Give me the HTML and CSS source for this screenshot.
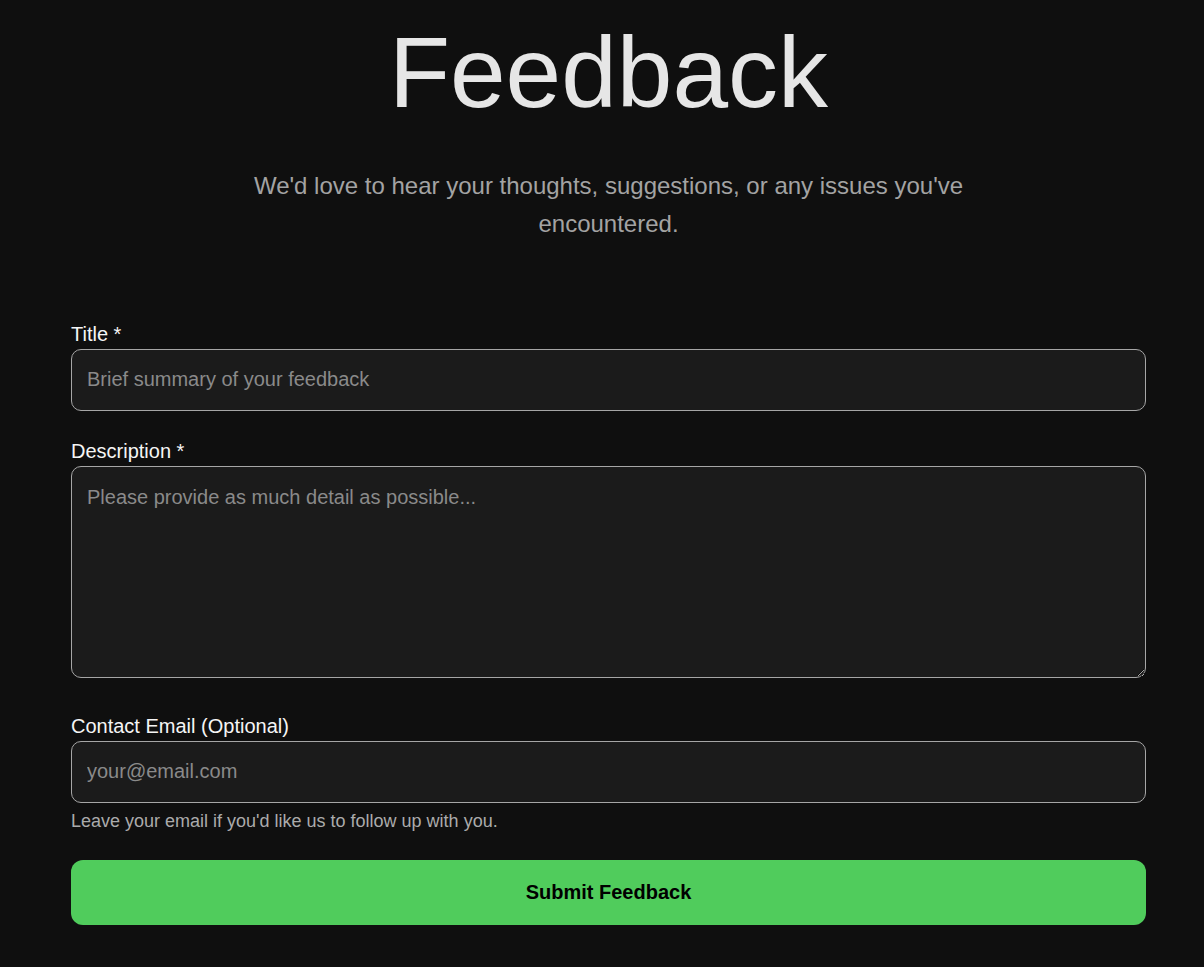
FILE: index.html
```html
<!DOCTYPE html>
<html lang="en">
<head>
<meta charset="utf-8">
<title>Feedback</title>
<link rel="stylesheet" href="styles.css">
</head>
<body>
<main class="page">
  <header class="hero">
    <h1 class="hero-title">Feedback</h1>
    <p class="hero-sub">We'd love to hear your thoughts, suggestions, or any issues you've encountered.</p>
  </header>
  <form class="form">
    <div class="field field-title">
      <label class="label" for="title">Title *</label>
      <input class="input" id="title" type="text" placeholder="Brief summary of your feedback">
    </div>
    <div class="field field-desc">
      <label class="label" for="desc">Description *</label>
      <textarea class="input textarea" id="desc" placeholder="Please provide as much detail as possible..."></textarea>
    </div>
    <div class="field field-email">
      <label class="label" for="email">Contact Email (Optional)</label>
      <input class="input" id="email" type="email" placeholder="your@email.com">
      <p class="help">Leave your email if you'd like us to follow up with you.</p>
    </div>
    <button class="submit" type="button">Submit Feedback</button>
  </form>
</main>
</body>
</html>
```
FILE: styles.css
```css
html, body {
  margin: 0;
  padding: 0;
  background: #0f0f0f;
}
body {
  font-family: "Liberation Sans", Arial, sans-serif;
  color: #f2f2f2;
}
.page {
  width: 1075px;
  margin: 0 0 0 71px;
  padding: 13px 0 40px;
}
.hero {
  display: flex;
  flex-direction: column;
  align-items: center;
  text-align: center;
}
.hero-title {
  margin: 0;
  font-size: 100px;
  font-weight: 400;
  line-height: 118px;
  color: #e6e6e6;
}
.hero-sub {
  margin: 36px 0 0;
  max-width: 720px;
  font-size: 24px;
  line-height: 38.4px;
  color: #a3a3a3;
}
.form {
  display: flex;
  flex-direction: column;
  margin-top: 79px;
}
.field {
  display: flex;
  flex-direction: column;
}
.field-desc {
  margin-top: 29px;
}
.field-email {
  margin-top: 37px;
}
.label {
  display: block;
  font-size: 20px;
  line-height: 23px;
  color: #f5f5f5;
  margin-bottom: 3px;
}
.input {
  display: block;
  box-sizing: border-box;
  width: 100%;
  height: 62px;
  margin: 0;
  padding: 18px 15px;
  font-family: "Liberation Sans", Arial, sans-serif;
  font-size: 20px;
  line-height: 24px;
  color: #eeeeee;
  background: #1b1b1b;
  border: 1px solid #a6a6a6;
  border-radius: 10px;
  outline: none;
}
.input::placeholder {
  color: #8a8a8a;
}
.textarea {
  height: 212px;
  resize: vertical;
}
.help {
  margin: 8px 0 0;
  font-size: 18px;
  line-height: 21px;
  color: #ababab;
}
.submit {
  display: block;
  width: 100%;
  height: 65px;
  margin-top: 28px;
  padding: 0;
  border: none;
  border-radius: 12px;
  background: #50cc5c;
  color: #000;
  font-family: "Liberation Sans", Arial, sans-serif;
  font-size: 20px;
  font-weight: 700;
  cursor: pointer;
}
```
